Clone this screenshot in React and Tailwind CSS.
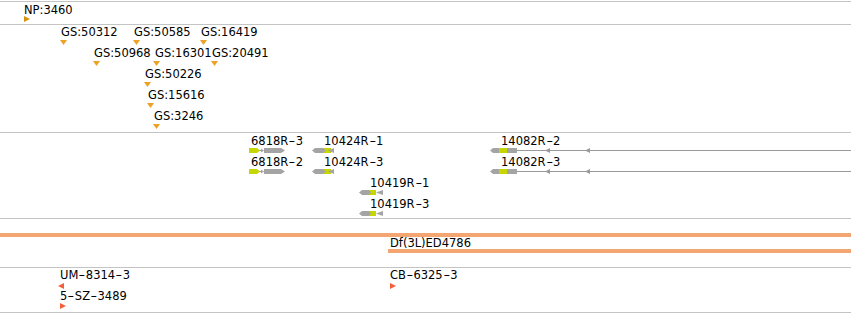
import React from "react";

const GRAY = "#a4a4a4";
const LIME = "#c6d600";

function withDashes(s) {
  const parts = s.split("-");
  const out = [];
  parts.forEach((p, i) => {
    if (i > 0)
      out.push(
        <span key={"d" + i} className="inline-block w-[7.5px] text-center scale-x-[1.6]">
          -
        </span>
      );
    out.push(<span key={"p" + i}>{p}</span>);
  });
  return out;
}

function Label({ x, y, t, children }) {
  // y = page y of capital top
  return (
    <div
      className="absolute whitespace-nowrap text-[11.5px] leading-[13px] text-black"
      style={{ left: x, top: y - 2 - t - 1 }}
    >
      {withDashes(children)}
    </div>
  );
}

function TriDown({ x, y, t, color }) {
  return (
    <svg className="absolute" width="7" height="5" style={{ left: x, top: y - t - 1 }}>
      <polygon points="0,0 7,0 3.5,5" fill={color} />
    </svg>
  );
}

function TriRight({ x, y, t, color }) {
  return (
    <svg className="absolute" width="6" height="6" style={{ left: x, top: y - t - 1 }}>
      <polygon points="0,0 6,3 0,6" fill={color} />
    </svg>
  );
}

function TriLeft({ x, y, t, color }) {
  return (
    <svg className="absolute" width="6" height="6" style={{ left: x, top: y - t - 1 }}>
      <polygon points="6,0 0,3 6,6" fill={color} />
    </svg>
  );
}

function Glyph({ x, y, t, w, children }) {
  return (
    <svg className="absolute" width={w} height="5" style={{ left: x, top: y - t - 1 }}>
      {children}
    </svg>
  );
}

function G6818({ x, y, t }) {
  return (
    <Glyph x={x} y={y} t={t} w={37}>
      <polygon points="0,0 8,0 11,2.5 8,5 0,5" fill={LIME} />
      <rect x="10" y="2" width="3" height="1" fill={GRAY} />
      <polygon points="12,0.5 15,2.5 12,4.5" fill={GRAY} />
      <polygon points="15,0 32,0 36,2.5 32,5 15,5" fill={GRAY} />
    </Glyph>
  );
}

function G10424({ x, y, t }) {
  return (
    <Glyph x={x} y={y} t={t} w={23}>
      <polygon points="0,2.5 3,0 11,0 11,5 3,5" fill={GRAY} />
      <polygon points="11,0 19,0 19,5 11,5" fill={LIME} />
      <polygon points="11,0 14,2.5 11,5" fill={GRAY} />
      <polygon points="16,2.5 22,0 22,5" fill={GRAY} />
    </Glyph>
  );
}

function G10419({ x, y, t }) {
  return (
    <Glyph x={x} y={y} t={t} w={25}>
      <polygon points="0,2.5 3,0 10,0 10,5 3,5" fill={GRAY} />
      <polygon points="10,0 17,0 17,5 10,5" fill={LIME} />
      <polygon points="10,0 12,2.5 10,5" fill={GRAY} />
      <polygon points="17,2.5 24,0 24,5" fill={GRAY} />
    </Glyph>
  );
}

function G14082({ x, y, t }) {
  const w = 851 - x;
  return (
    <Glyph x={x} y={y} t={t} w={w}>
      <polygon points="0,2.5 3,0 9,0 9,5 3,5" fill={GRAY} />
      <rect x="9" y="0" width="8" height="5" fill={LIME} />
      <rect x="17" y="0" width="10" height="5" fill={GRAY} />
      <rect x="27" y="2" width={w - 27} height="1" fill="#9a9a9a" />
      <polygon points="55,2.5 60,0 60,5" fill="#9a9a9a" />
      <polygon points="95,2.5 100,0 100,5" fill="#9a9a9a" />
    </Glyph>
  );
}

const GS = "#eba226";
const RED = "#f2603a";

export default function App() {
  const T1 = 1, T2 = 24, T3 = 132, T4 = 218, T5 = 267;
  const gsLabels = [
    ["GS:50312", 61, 28], ["GS:50585", 134, 28], ["GS:16419", 201, 28],
    ["GS:50968", 94, 49], ["GS:16301", 155, 49], ["GS:20491", 212, 49],
    ["GS:50226", 145, 70], ["GS:15616", 148, 91], ["GS:3246", 154, 112],
  ];
  const gsTris = [
    [60, 40], [133, 40], [200, 40],
    [93, 61], [153, 61], [211, 61],
    [144, 82], [147, 103], [153, 124],
  ];
  return (
    <div className="w-[851px] h-[313px] bg-white overflow-hidden font-['DejaVu_Sans','Bitstream_Vera_Sans',sans-serif]">
      <div className="h-px" />
      {/* Track 1 */}
      <div className="relative h-[23px] border-t border-[#c4c4c4]">
        <Label x={24} y={6} t={T1}>NP:3460</Label>
        <TriRight x={24} y={16} t={T1} color="#d8930c" />
      </div>
      {/* Track 2 */}
      <div className="relative h-[108px] border-t border-[#c4c4c4]">
        {gsLabels.map(([s, x, y]) => (
          <Label key={s} x={x} y={y} t={T2}>{s}</Label>
        ))}
        {gsTris.map(([x, y]) => (
          <TriDown key={x + "-" + y} x={x} y={y} t={T2} color={GS} />
        ))}
      </div>
      {/* Track 3 */}
      <div className="relative h-[86px] border-t border-[#c4c4c4]">
        <Label x={251} y={137} t={T3}>6818R-3</Label>
        <Label x={324} y={137} t={T3}>10424R-1</Label>
        <Label x={501} y={137} t={T3}>14082R-2</Label>
        <Label x={251} y={158} t={T3}>6818R-2</Label>
        <Label x={324} y={158} t={T3}>10424R-3</Label>
        <Label x={501} y={158} t={T3}>14082R-3</Label>
        <Label x={370} y={179} t={T3}>10419R-1</Label>
        <Label x={370} y={200} t={T3}>10419R-3</Label>
        <G6818 x={249} y={148} t={T3} />
        <G6818 x={249} y={169} t={T3} />
        <G10424 x={312} y={148} t={T3} />
        <G10424 x={312} y={169} t={T3} />
        <G10419 x={359} y={190} t={T3} />
        <G10419 x={359} y={211} t={T3} />
        <G14082 x={490} y={148} t={T3} />
        <G14082 x={490} y={169} t={T3} />
      </div>
      {/* Track 4 */}
      <div className="relative h-[49px] border-t border-[#c4c4c4]">
        <div className="absolute left-0 right-0 top-[14px] h-[4px] bg-[#f4a672]" />
        <Label x={390} y={239} t={T4}>Df(3L)ED4786</Label>
        <div className="absolute left-[388px] right-0 top-[30px] h-[4px] bg-[#f4a672]" />
      </div>
      {/* Track 5 */}
      <div className="relative h-[46px] border-y border-[#c4c4c4]">
        <Label x={60} y={271} t={T5}>UM-8314-3</Label>
        <TriLeft x={58} y={283} t={T5} color={RED} />
        <Label x={60} y={292} t={T5}>5-SZ-3489</Label>
        <TriRight x={60} y={303} t={T5} color={RED} />
        <Label x={390} y={271} t={T5}>CB-6325-3</Label>
        <TriRight x={390} y={283} t={T5} color={RED} />
      </div>
    </div>
  );
}
